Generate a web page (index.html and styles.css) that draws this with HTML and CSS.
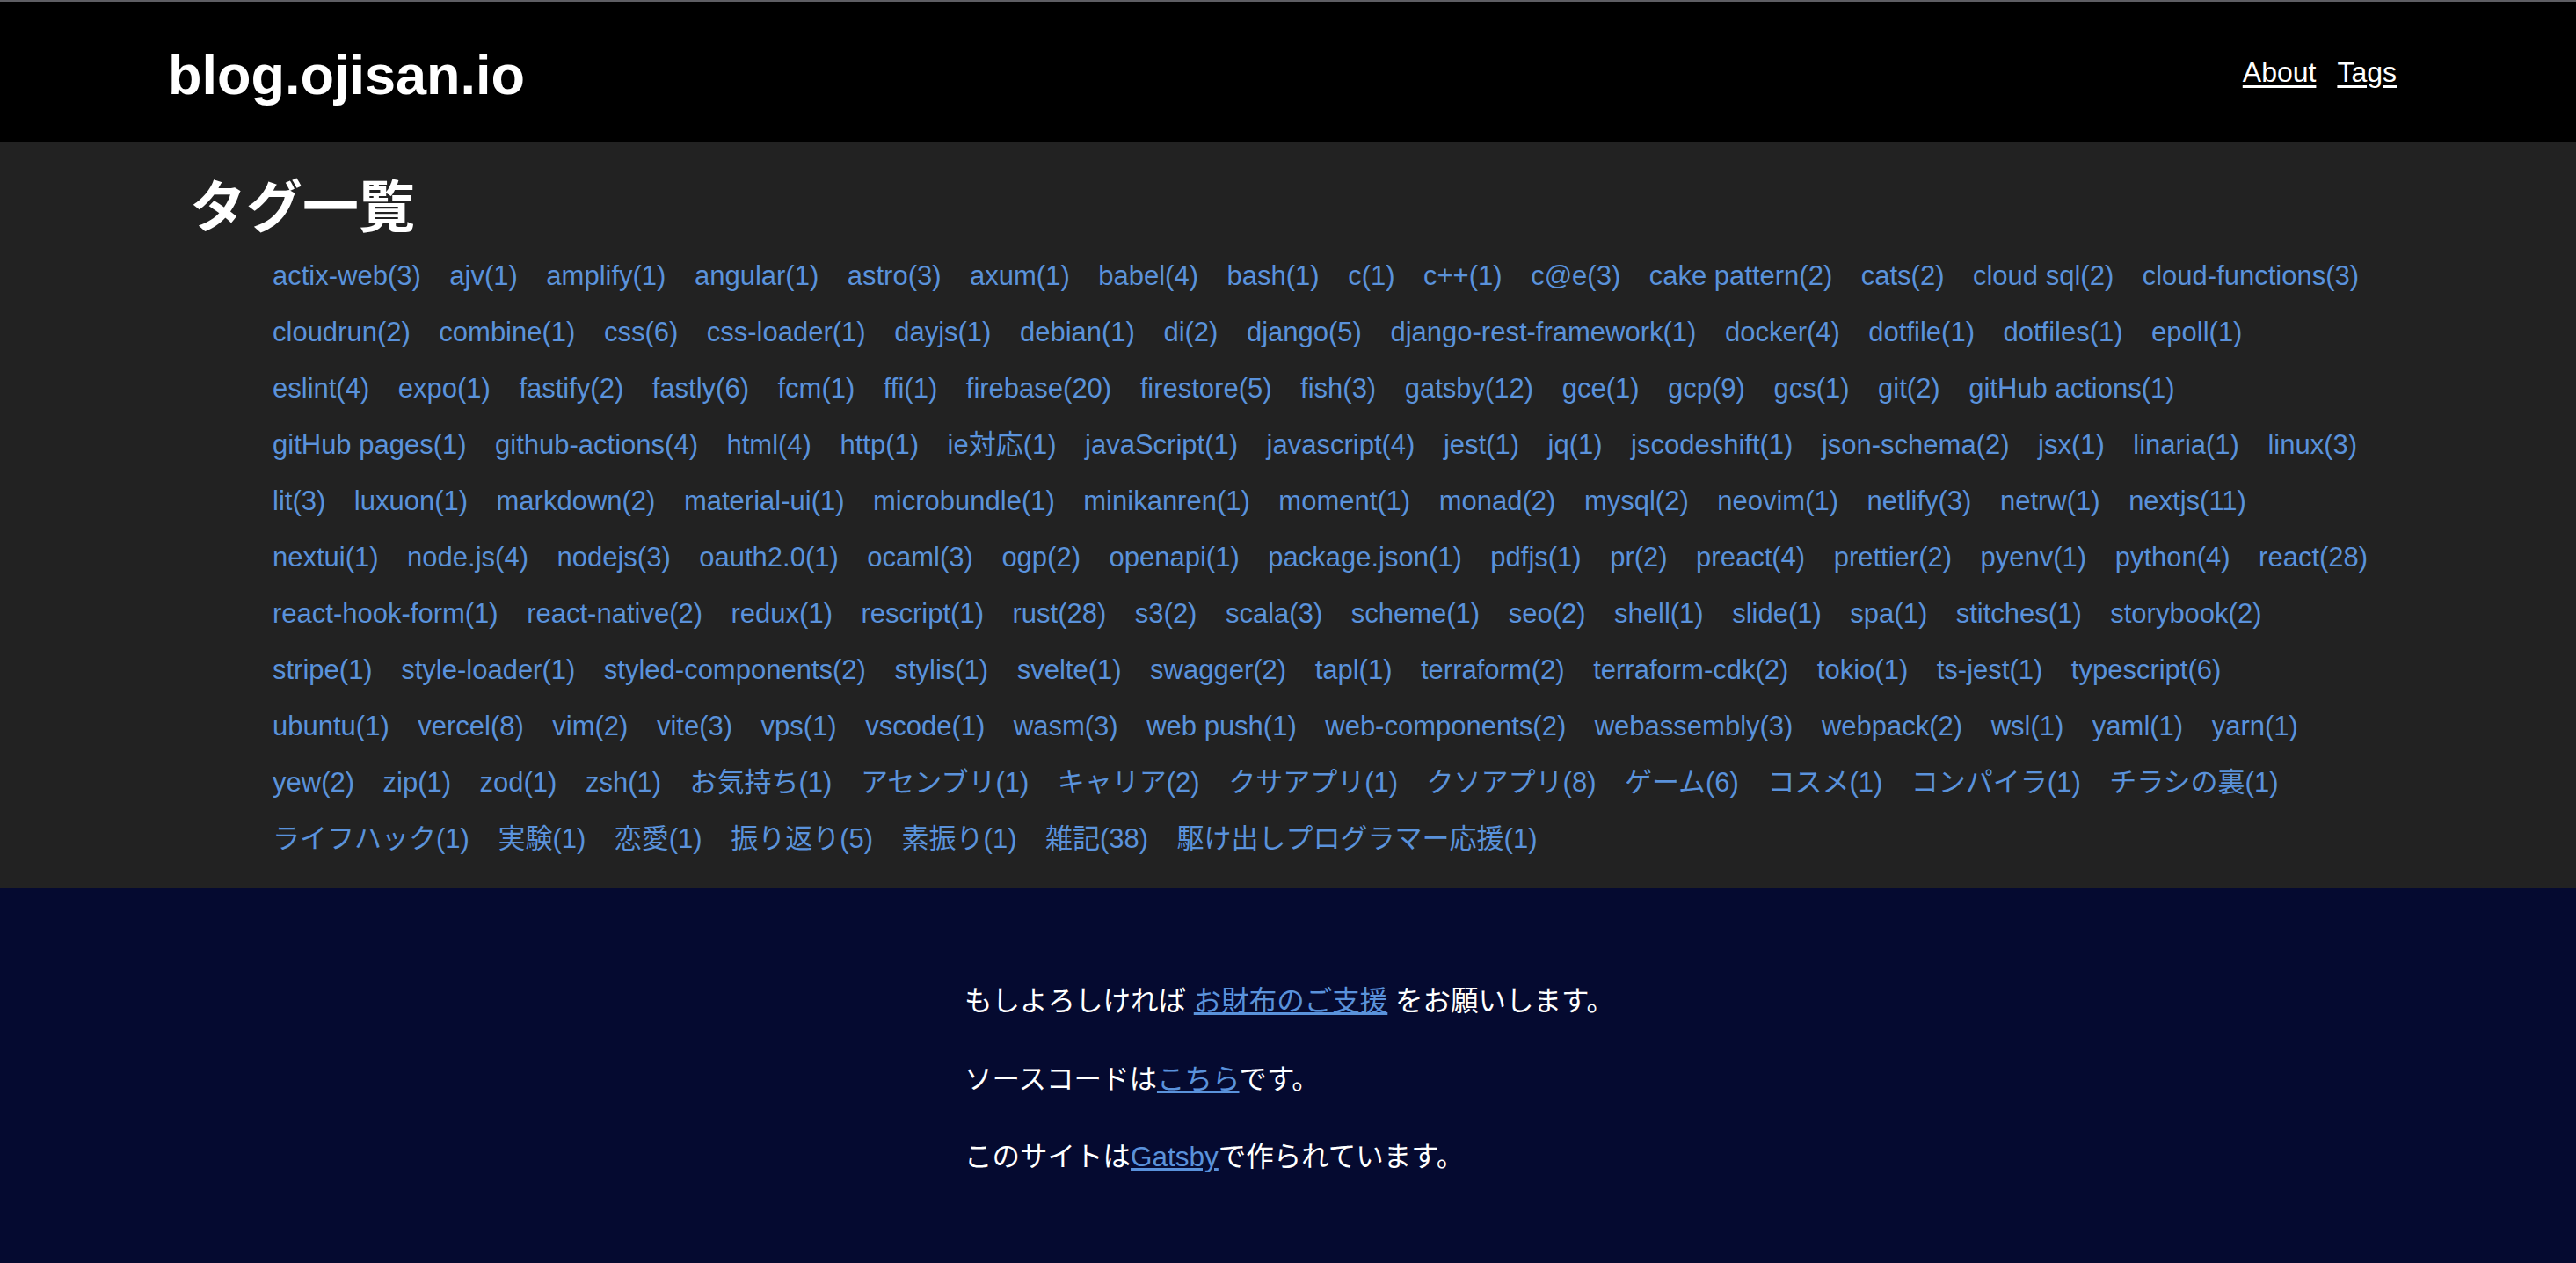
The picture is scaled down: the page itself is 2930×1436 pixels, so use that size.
FILE: index.html
```html
<!DOCTYPE html>
<html lang="ja">
<head>
<meta charset="utf-8">
<title>タグ一覧 | blog.ojisan.io</title>
<link rel="stylesheet" href="styles.css">
</head>
<body>
<header class="site-header">
  <div class="header-inner">
    <a class="site-title" href="#">blog.ojisan.io</a>
    <nav class="site-nav">
      <a href="#">About</a>
      <a href="#">Tags</a>
    </nav>
  </div>
</header>
<main class="main">
  <div class="content">
    <h1 class="page-title">タグ一覧</h1>
    <ul class="tag-list">
      <li><a href="#">actix-web(3)</a></li>
      <li><a href="#">ajv(1)</a></li>
      <li><a href="#">amplify(1)</a></li>
      <li><a href="#">angular(1)</a></li>
      <li><a href="#">astro(3)</a></li>
      <li><a href="#">axum(1)</a></li>
      <li><a href="#">babel(4)</a></li>
      <li><a href="#">bash(1)</a></li>
      <li><a href="#">c(1)</a></li>
      <li><a href="#">c++(1)</a></li>
      <li><a href="#">c@e(3)</a></li>
      <li><a href="#">cake pattern(2)</a></li>
      <li><a href="#">cats(2)</a></li>
      <li><a href="#">cloud sql(2)</a></li>
      <li><a href="#">cloud-functions(3)</a></li>
      <li class="break" aria-hidden="true"></li>
      <li><a href="#">cloudrun(2)</a></li>
      <li><a href="#">combine(1)</a></li>
      <li><a href="#">css(6)</a></li>
      <li><a href="#">css-loader(1)</a></li>
      <li><a href="#">dayjs(1)</a></li>
      <li><a href="#">debian(1)</a></li>
      <li><a href="#">di(2)</a></li>
      <li><a href="#">django(5)</a></li>
      <li><a href="#">django-rest-framework(1)</a></li>
      <li><a href="#">docker(4)</a></li>
      <li><a href="#">dotfile(1)</a></li>
      <li><a href="#">dotfiles(1)</a></li>
      <li><a href="#">epoll(1)</a></li>
      <li class="break" aria-hidden="true"></li>
      <li><a href="#">eslint(4)</a></li>
      <li><a href="#">expo(1)</a></li>
      <li><a href="#">fastify(2)</a></li>
      <li><a href="#">fastly(6)</a></li>
      <li><a href="#">fcm(1)</a></li>
      <li><a href="#">ffi(1)</a></li>
      <li><a href="#">firebase(20)</a></li>
      <li><a href="#">firestore(5)</a></li>
      <li><a href="#">fish(3)</a></li>
      <li><a href="#">gatsby(12)</a></li>
      <li><a href="#">gce(1)</a></li>
      <li><a href="#">gcp(9)</a></li>
      <li><a href="#">gcs(1)</a></li>
      <li><a href="#">git(2)</a></li>
      <li><a href="#">gitHub actions(1)</a></li>
      <li class="break" aria-hidden="true"></li>
      <li><a href="#">gitHub pages(1)</a></li>
      <li><a href="#">github-actions(4)</a></li>
      <li><a href="#">html(4)</a></li>
      <li><a href="#">http(1)</a></li>
      <li><a href="#">ie対応(1)</a></li>
      <li><a href="#">javaScript(1)</a></li>
      <li><a href="#">javascript(4)</a></li>
      <li><a href="#">jest(1)</a></li>
      <li><a href="#">jq(1)</a></li>
      <li><a href="#">jscodeshift(1)</a></li>
      <li><a href="#">json-schema(2)</a></li>
      <li><a href="#">jsx(1)</a></li>
      <li><a href="#">linaria(1)</a></li>
      <li><a href="#">linux(3)</a></li>
      <li class="break" aria-hidden="true"></li>
      <li><a href="#">lit(3)</a></li>
      <li><a href="#">luxuon(1)</a></li>
      <li><a href="#">markdown(2)</a></li>
      <li><a href="#">material-ui(1)</a></li>
      <li><a href="#">microbundle(1)</a></li>
      <li><a href="#">minikanren(1)</a></li>
      <li><a href="#">moment(1)</a></li>
      <li><a href="#">monad(2)</a></li>
      <li><a href="#">mysql(2)</a></li>
      <li><a href="#">neovim(1)</a></li>
      <li><a href="#">netlify(3)</a></li>
      <li><a href="#">netrw(1)</a></li>
      <li><a href="#">nextjs(11)</a></li>
      <li class="break" aria-hidden="true"></li>
      <li><a href="#">nextui(1)</a></li>
      <li><a href="#">node.js(4)</a></li>
      <li><a href="#">nodejs(3)</a></li>
      <li><a href="#">oauth2.0(1)</a></li>
      <li><a href="#">ocaml(3)</a></li>
      <li><a href="#">ogp(2)</a></li>
      <li><a href="#">openapi(1)</a></li>
      <li><a href="#">package.json(1)</a></li>
      <li><a href="#">pdfjs(1)</a></li>
      <li><a href="#">pr(2)</a></li>
      <li><a href="#">preact(4)</a></li>
      <li><a href="#">prettier(2)</a></li>
      <li><a href="#">pyenv(1)</a></li>
      <li><a href="#">python(4)</a></li>
      <li><a href="#">react(28)</a></li>
      <li class="break" aria-hidden="true"></li>
      <li><a href="#">react-hook-form(1)</a></li>
      <li><a href="#">react-native(2)</a></li>
      <li><a href="#">redux(1)</a></li>
      <li><a href="#">rescript(1)</a></li>
      <li><a href="#">rust(28)</a></li>
      <li><a href="#">s3(2)</a></li>
      <li><a href="#">scala(3)</a></li>
      <li><a href="#">scheme(1)</a></li>
      <li><a href="#">seo(2)</a></li>
      <li><a href="#">shell(1)</a></li>
      <li><a href="#">slide(1)</a></li>
      <li><a href="#">spa(1)</a></li>
      <li><a href="#">stitches(1)</a></li>
      <li><a href="#">storybook(2)</a></li>
      <li class="break" aria-hidden="true"></li>
      <li><a href="#">stripe(1)</a></li>
      <li><a href="#">style-loader(1)</a></li>
      <li><a href="#">styled-components(2)</a></li>
      <li><a href="#">stylis(1)</a></li>
      <li><a href="#">svelte(1)</a></li>
      <li><a href="#">swagger(2)</a></li>
      <li><a href="#">tapl(1)</a></li>
      <li><a href="#">terraform(2)</a></li>
      <li><a href="#">terraform-cdk(2)</a></li>
      <li><a href="#">tokio(1)</a></li>
      <li><a href="#">ts-jest(1)</a></li>
      <li><a href="#">typescript(6)</a></li>
      <li class="break" aria-hidden="true"></li>
      <li><a href="#">ubuntu(1)</a></li>
      <li><a href="#">vercel(8)</a></li>
      <li><a href="#">vim(2)</a></li>
      <li><a href="#">vite(3)</a></li>
      <li><a href="#">vps(1)</a></li>
      <li><a href="#">vscode(1)</a></li>
      <li><a href="#">wasm(3)</a></li>
      <li><a href="#">web push(1)</a></li>
      <li><a href="#">web-components(2)</a></li>
      <li><a href="#">webassembly(3)</a></li>
      <li><a href="#">webpack(2)</a></li>
      <li><a href="#">wsl(1)</a></li>
      <li><a href="#">yaml(1)</a></li>
      <li><a href="#">yarn(1)</a></li>
      <li class="break" aria-hidden="true"></li>
      <li><a href="#">yew(2)</a></li>
      <li><a href="#">zip(1)</a></li>
      <li><a href="#">zod(1)</a></li>
      <li><a href="#">zsh(1)</a></li>
      <li><a href="#">お気持ち(1)</a></li>
      <li><a href="#">アセンブリ(1)</a></li>
      <li><a href="#">キャリア(2)</a></li>
      <li><a href="#">クサアプリ(1)</a></li>
      <li><a href="#">クソアプリ(8)</a></li>
      <li><a href="#">ゲーム(6)</a></li>
      <li><a href="#">コスメ(1)</a></li>
      <li><a href="#">コンパイラ(1)</a></li>
      <li><a href="#">チラシの裏(1)</a></li>
      <li class="break" aria-hidden="true"></li>
      <li><a href="#">ライフハック(1)</a></li>
      <li><a href="#">実験(1)</a></li>
      <li><a href="#">恋愛(1)</a></li>
      <li><a href="#">振り返り(5)</a></li>
      <li><a href="#">素振り(1)</a></li>
      <li><a href="#">雑記(38)</a></li>
      <li><a href="#">駆け出しプログラマー応援(1)</a></li>
    </ul>
  </div>
</main>
<footer class="site-footer">
  <div class="footer-inner">
    <p>もしよろしければ <a href="#">お財布のご支援</a> をお願いします。</p>
    <p>ソースコードは<a href="#">こちら</a>です。</p>
    <p>このサイトは<a href="#">Gatsby</a>で作られています。</p>
  </div>
</footer>
</body>
</html>
```
FILE: styles.css
```css
* {
  box-sizing: border-box;
}

html, body {
  margin: 0;
  padding: 0;
}

body {
  font-family: "Liberation Sans", "Noto Sans CJK JP", sans-serif;
  font-size: 32px;
  color: #ffffff;
  background: #050a30;
}

.site-header {
  background: #000000;
  border-top: 2px solid #5e5e63;
}

.header-inner {
  width: 2548px;
  margin: 0 auto;
  height: 160px;
  display: flex;
  align-items: center;
  justify-content: space-between;
  padding-right: 13px;
}

.site-title {
  color: #ffffff;
  text-decoration: none;
  font-weight: bold;
  font-size: 63px;
  line-height: 64px;
  margin-top: 6px;
}

.site-nav {
  display: flex;
  gap: 24px;
  line-height: 32px;
}

.site-nav a {
  color: #ffffff;
  text-decoration: underline;
  text-underline-offset: 4px;
}

.main {
  background: #222222;
}

.content {
  width: 2548px;
  margin: 0 auto;
  padding: 42px 27px 24px 25px;
}

.page-title {
  margin: 0;
  font-size: 64px;
  line-height: 64px;
  font-weight: bold;
  color: #ffffff;
}

.tag-list {
  list-style: none;
  margin: 14px -27px 0 0;
  padding: 0 0 0 94px;
  display: flex;
  flex-wrap: wrap;
  column-gap: 32.5px;
  font-size: 31px;
}

.tag-list li {
  line-height: 64px;
}

.tag-list .break {
  flex-basis: 100%;
  height: 0;
  line-height: 0;
}

.tag-list a {
  color: #5a92db;
  text-decoration: none;
}

.site-footer {
  background: #050a30;
  padding: 100px 0 80px;
}

.footer-inner {
  width: 736px;
  margin: 0 auto;
  display: flex;
  flex-direction: column;
  gap: 32.5px;
  font-size: 31.5px;
}

.footer-inner p {
  margin: 0;
  line-height: 56px;
  white-space: nowrap;
}

.footer-inner a {
  color: #5a92db;
  text-decoration: underline;
}
```
